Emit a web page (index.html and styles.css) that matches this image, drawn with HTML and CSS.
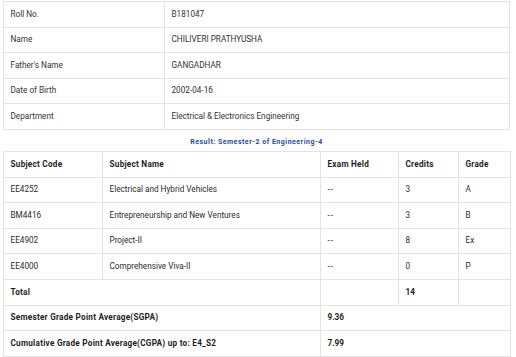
FILE: index.html
```html
<!DOCTYPE html>
<html>
<head>
<meta charset="utf-8">
<link rel="stylesheet" href="styles.css">
</head>
<body>
<div class="page">
  <table class="info">
    <colgroup><col class="c-label"><col></colgroup>
    <tr><td>Roll No.</td><td>B181047</td></tr>
    <tr><td>Name</td><td>CHILIVERI PRATHYUSHA</td></tr>
    <tr><td>Father's Name</td><td>GANGADHAR</td></tr>
    <tr><td>Date of Birth</td><td>2002-04-16</td></tr>
    <tr><td>Department</td><td>Electrical &amp; Electronics Engineering</td></tr>
  </table>
  <div class="caption">Result: Semester-2 of Engineering-4</div>
  <table class="result">
    <colgroup>
      <col class="c-code"><col class="c-name"><col class="c-exam"><col class="c-cred"><col class="c-grade">
    </colgroup>
    <tr class="head"><th>Subject Code</th><th>Subject Name</th><th>Exam Held</th><th>Credits</th><th>Grade</th></tr>
    <tr><td>EE4252</td><td>Electrical and Hybrid Vehicles</td><td class="dash">--</td><td>3</td><td>A</td></tr>
    <tr><td>BM4416</td><td>Entrepreneurship and New Ventures</td><td class="dash">--</td><td>3</td><td>B</td></tr>
    <tr><td>EE4902</td><td>Project-II</td><td class="dash">--</td><td>8</td><td>Ex</td></tr>
    <tr><td>EE4000</td><td>Comprehensive Viva-II</td><td class="dash">--</td><td>0</td><td>P</td></tr>
    <tr><th colspan="2">Total</th><td></td><td class="num">14</td><td></td></tr>
    <tr><th colspan="2">Semester Grade Point Average(SGPA)</th><td colspan="3" class="num">9.36</td></tr>
    <tr><th colspan="2">Cumulative Grade Point Average(CGPA) up to: E4_S2</th><td colspan="3" class="num">7.99</td></tr>
  </table>
</div>
</body>
</html>
```
FILE: styles.css
```css
html, body {
  margin: 0;
  padding: 0;
  background: #ffffff;
}
body {
  font-family: Roboto, "Liberation Sans", Arial, sans-serif;
  font-size: 8.2px;
  color: #2b2b2b;
}
.page {
  width: 507px;
  padding: 1px 0 0 3px;
}
table {
  width: 507px;
  border-collapse: collapse;
  table-layout: fixed;
}
td, th {
  border: 1px solid #e3e3e3;
  padding: 7.6px 6.5px;
  line-height: 9.4px;
  text-align: left;
  vertical-align: middle;
  white-space: nowrap;
}
th {
  font-weight: 700;
  color: #1e1e1e;
  letter-spacing: 0.25px;
}
.info td {
  color: #333333;
}
.c-label { width: 161px; }
.c-code { width: 99px; }
.c-name { width: 218px; }
.c-exam { width: 78px; }
.c-cred { width: 60px; }
.c-grade { width: 52px; }
.num {
  font-weight: 700;
  color: #1e1e1e;
}
.dash {
  letter-spacing: 1px;
}
.caption {
  text-align: center;
  color: #1f4b9c;
  font-weight: 700;
  font-size: 7px;
  letter-spacing: 0.5px;
  padding-top: 4px;
  height: 17px;
  line-height: 17px;
}
```
